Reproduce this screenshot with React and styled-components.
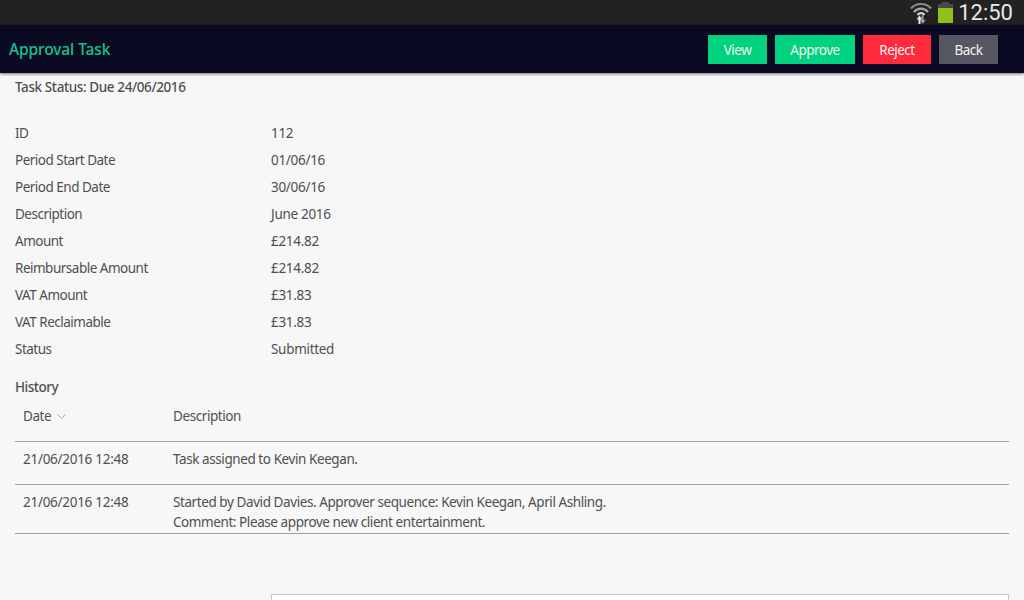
import styled, { createGlobalStyle } from "styled-components";
import { ChevronDown } from "lucide-react";

const GlobalStyle = createGlobalStyle`
  html, body {
    margin: 0;
    height: 100%;
    background: #f7f7f7;
  }
  body {
    font-family: "Noto Sans", "Open Sans", sans-serif;
    overflow: hidden;
  }
`;

const details = [
  ["ID", "112"],
  ["Period Start Date", "01/06/16"],
  ["Period End Date", "30/06/16"],
  ["Description", "June 2016"],
  ["Amount", "£214.82"],
  ["Reimbursable Amount", "£214.82"],
  ["VAT Amount", "£31.83"],
  ["VAT Reclaimable", "£31.83"],
  ["Status", "Submitted"],
];

const App = () => {
  return (
    <Page>
      <GlobalStyle />
      <StatusBar>
        <WifiIcon />
        <BatteryIcon />
        <Clock>12:50</Clock>
      </StatusBar>
      <AppBar>
        <Title>Approval Task</Title>
        <Actions>
          <ActionButton $bg="#00d27f" $width={59}>View</ActionButton>
          <ActionButton $bg="#00d27f" $width={80}>Approve</ActionButton>
          <ActionButton $bg="#ff2a3c" $width={68}>Reject</ActionButton>
          <ActionButton $bg="#575763" $width={59}>Back</ActionButton>
        </Actions>
      </AppBar>
      <Content>
        <TaskStatus>Task Status: Due 24/06/2016</TaskStatus>
        <DetailList>
          {details.map(([label, value]) => (
            <DetailRow key={label}>
              <DetailLabel>{label}</DetailLabel>
              <DetailValue>{value}</DetailValue>
            </DetailRow>
          ))}
        </DetailList>
        <SectionTitle>History</SectionTitle>
        <HistoryTable>
          <thead>
            <tr>
              <HeadCell $width={150}>
                Date <SortIcon size={15} strokeWidth={1} />
              </HeadCell>
              <HeadCell>Description</HeadCell>
            </tr>
          </thead>
          <tbody>
            <tr>
              <DateCell $height={43}>21/06/2016 12:48</DateCell>
              <Cell $height={43}>Task assigned to Kevin Keegan.</Cell>
            </tr>
            <tr>
              <DateCell $height={49}>21/06/2016 12:48</DateCell>
              <Cell $height={49}>
                Started by David Davies. Approver sequence: Kevin Keegan, April Ashling.
                <br />
                Comment: Please approve new client entertainment.
              </Cell>
            </tr>
          </tbody>
        </HistoryTable>
        <CommentRow>
          <CommentBox />
        </CommentRow>
      </Content>
    </Page>
  );
};

const WifiIcon = () => (
  <svg width="22" height="24" viewBox="0 0 22 24">
    <path d="M1 7.5 C6 1.5 16 1.5 21 7.5" fill="none" stroke="#8c8c8c" strokeWidth="2.2" />
    <path d="M4 11 C8 6.5 14 6.5 18 11" fill="none" stroke="#a6a6a6" strokeWidth="2.2" />
    <path d="M7.5 14 C9.5 11.5 12.5 11.5 14.5 14" fill="none" stroke="#d4d4d4" strokeWidth="2.2" />
    <path d="M6.5 18.5 L9.5 14.5 L12 18.5 H10.5 V23 H8.5 V18.5 Z" fill="#ececec" />
    <path d="M10 19 H11.5 V14.5 H13.5 V19 H15.5 L12.8 23 Z" fill="#a0a0a0" />
  </svg>
);

const BatteryIcon = () => (
  <Battery>
    <BatteryCap />
    <BatteryLevel />
  </Battery>
);

const Page = styled.div`
  width: 1024px;
  height: 600px;
  display: flex;
  flex-direction: column;
  overflow: hidden;
`;

const StatusBar = styled.div`
  height: 25px;
  flex: none;
  display: flex;
  align-items: center;
  justify-content: flex-end;
  background: #222222;
  padding-right: 11px;
`;

const Battery = styled.div`
  width: 15px;
  height: 21px;
  align-self: flex-start;
  margin: 2px 5px 0 6px;
  display: flex;
  flex-direction: column;
  align-items: center;
`;

const BatteryCap = styled.div`
  width: 7px;
  height: 2px;
  background: #4a4a4a;
`;

const BatteryLevel = styled.div`
  width: 15px;
  height: 19px;
  background: linear-gradient(#4a4a4a 0 4px, #8fc01c 4px);
`;

const Clock = styled.span`
  font-family: "Roboto", sans-serif;
  font-size: 22px;
  font-weight: 400;
  color: #e8e8e8;
`;

const AppBar = styled.header`
  height: 48px;
  flex: none;
  display: flex;
  align-items: center;
  justify-content: space-between;
  background: #0b0a23;
  padding: 0 26px 0 9px;
  box-shadow: 0 1px 3px rgba(0, 0, 0, 0.55);
`;

const Title = styled.h1`
  margin: 0;
  font-size: 15.5px;
  font-weight: 500;
  letter-spacing: -0.1px;
  color: #14c48c;
`;

const Actions = styled.div`
  display: flex;
  gap: 8px;
`;

const ActionButton = styled.button`
  width: ${(p) => p.$width}px;
  height: 29px;
  padding: 1px 0 0;
  border: 0;
  background: ${(p) => p.$bg};
  color: #f2f2f2;
  font-family: inherit;
  font-size: 13.5px;
  letter-spacing: -0.5px;
`;

const Content = styled.main`
  flex: 1;
  padding: 0 15px;
  color: #4f4f4f;
  font-size: 13.5px;
  letter-spacing: -0.5px;
`;

const TaskStatus = styled.div`
  height: 19px;
  margin-top: 5px;
  line-height: 19px;
  font-weight: 500;
  letter-spacing: -0.4px;
`;

const DetailList = styled.div`
  margin-top: 23px;
`;

const DetailRow = styled.div`
  height: 27px;
  line-height: 27px;
  display: flex;
`;

const DetailLabel = styled.span`
  width: 256px;
  flex: none;
`;

const DetailValue = styled.span`
  letter-spacing: -0.3px;
`;

const SectionTitle = styled.div`
  margin-top: 14px;
  height: 20px;
  line-height: 20px;
  font-weight: 500;
`;

const HistoryTable = styled.table`
  width: 994px;
  table-layout: fixed;
  border-collapse: collapse;
  letter-spacing: -0.42px;
`;

const HeadCell = styled.th`
  width: ${(p) => (p.$width ? `${p.$width}px` : "auto")};
  height: 44px;
  padding: 0 8px 6px;
  box-sizing: border-box;
  text-align: left;
  font-weight: 400;
  border-bottom: 1px solid #a0a0a0;
`;

const SortIcon = styled(ChevronDown)`
  vertical-align: -3px;
  color: #707070;
`;

const Cell = styled.td`
  height: ${(p) => p.$height}px;
  box-sizing: border-box;
  padding: 7px 8px 0;
  vertical-align: top;
  line-height: 20px;
  border-bottom: 1px solid #a0a0a0;
`;

const DateCell = styled(Cell)`
  letter-spacing: -0.28px;
`;

const CommentRow = styled.div`
  margin-top: 60px;
  padding-left: 256px;
`;

const CommentBox = styled.div`
  height: 40px;
  background: #ffffff;
  border: 1px solid #c8c8c8;
`;

export default App;
